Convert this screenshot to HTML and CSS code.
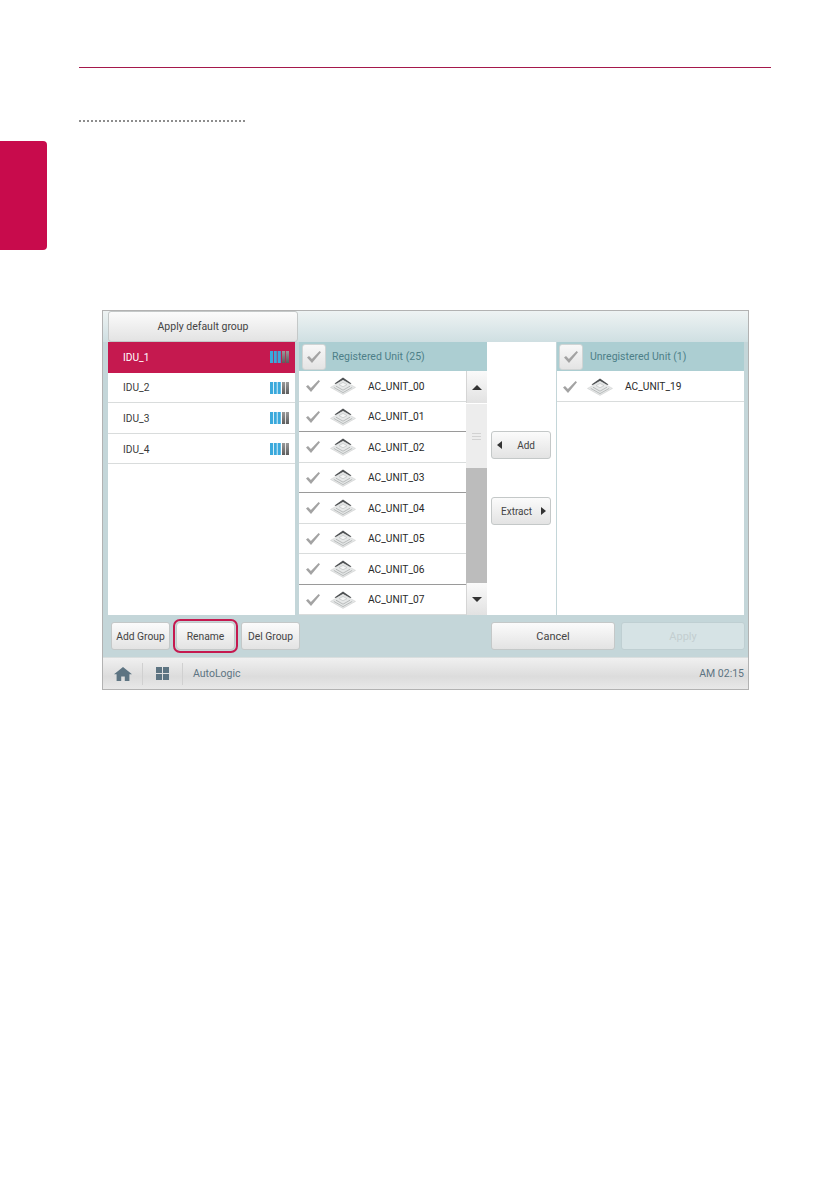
FILE: index.html
```html
<!DOCTYPE html>
<html lang="en">

<head>
    <meta charset="UTF-8">
    <title>AutoLogic group</title>
    <link rel="stylesheet" href="styles.css">
</head>

<body>
    <svg class="defs" width="0" height="0">
        <defs>
            <linearGradient id="bar-grey" x1="0" y1="0" x2="0" y2="1">
                <stop offset="0" stop-color="#9a9a9a" />
                <stop offset="1" stop-color="#5c5c5c" />
            </linearGradient>
        </defs>
        <symbol id="check" viewBox="0 0 16 14">
            <path d="M1 7.5l2-1.6 2.9 3L13.6 1l1.4 1.2L6 13z" fill="#a3a3a3" />
        </symbol>
        <symbol id="unit" viewBox="0 0 26 18">
            <path d="M13 .5L21.5 6.4 20 7 13 3 6 7 4.5 6.4z" fill="#4f5254" />
            <path d="M13 3.4L25.5 10.4 13 17.4 .5 10.4z" fill="#e6e8e8" stroke="#c8cbcb" stroke-width=".5" />
            <path d="M13 5.4L9 7.6l4 2.2 4-2.2z" fill="#f4f5f5" stroke="#bcbfbf" stroke-width=".6" />
            <path d="M6 9.2l7 4 7-4M3.8 10.4l9.2 5.2 9.2-5.2" fill="none" stroke="#b2b5b5" stroke-width=".9" />
        </symbol>
        <symbol id="bars" viewBox="0 0 19 12">
            <path d="M0 0h3v12H0zM3.8 0h3v12h-3zM7.6 0h3.2v12H7.6z" fill="#3aa9dc" />
            <path d="M12 0h3.2v12H12zM16 0h3v12h-3z" fill="url(#bar-grey)" />
        </symbol>
    </svg>

    <header class="page-top">
        <div class="page-rule"></div>
        <div class="page-dots"></div>
    </header>
    <div class="side-tab"></div>

    <section class="panel">
        <div class="top-bar">
            <button class="btn btn-default">Apply default group</button>
        </div>

        <div class="columns">
            <div class="col col-groups">
                <div class="group-row active"><span>IDU_1</span><svg class="bars"><use href="#bars" /></svg></div>
                <div class="group-row"><span>IDU_2</span><svg class="bars"><use href="#bars" /></svg></div>
                <div class="group-row"><span>IDU_3</span><svg class="bars"><use href="#bars" /></svg></div>
                <div class="group-row"><span>IDU_4</span><svg class="bars"><use href="#bars" /></svg></div>
            </div>

            <div class="col col-units">
                <div class="col-head">
                    <span class="check-box"><svg class="check"><use href="#check" /></svg></span>
                    <span>Registered Unit (25)</span>
                </div>
                <div class="unit-body">
                    <div class="unit-list">
                        <div class="unit-row"><svg class="check"><use href="#check" /></svg><svg class="unit"><use href="#unit" /></svg><span>AC_UNIT_00</span></div>
                        <div class="unit-row dark"><svg class="check"><use href="#check" /></svg><svg class="unit"><use href="#unit" /></svg><span>AC_UNIT_01</span></div>
                        <div class="unit-row"><svg class="check"><use href="#check" /></svg><svg class="unit"><use href="#unit" /></svg><span>AC_UNIT_02</span></div>
                        <div class="unit-row dark"><svg class="check"><use href="#check" /></svg><svg class="unit"><use href="#unit" /></svg><span>AC_UNIT_03</span></div>
                        <div class="unit-row"><svg class="check"><use href="#check" /></svg><svg class="unit"><use href="#unit" /></svg><span>AC_UNIT_04</span></div>
                        <div class="unit-row"><svg class="check"><use href="#check" /></svg><svg class="unit"><use href="#unit" /></svg><span>AC_UNIT_05</span></div>
                        <div class="unit-row dark"><svg class="check"><use href="#check" /></svg><svg class="unit"><use href="#unit" /></svg><span>AC_UNIT_06</span></div>
                        <div class="unit-row"><svg class="check"><use href="#check" /></svg><svg class="unit"><use href="#unit" /></svg><span>AC_UNIT_07</span></div>
                    </div>
                    <div class="scroll">
                        <div class="scroll-btn"><i class="tri-up"></i></div>
                        <div class="scroll-thumb"><i></i><i></i><i></i></div>
                        <div class="scroll-track"></div>
                        <div class="scroll-btn"><i class="tri-down"></i></div>
                    </div>
                </div>
            </div>

            <div class="col-move">
                <button class="btn btn-move"><i class="tri-left"></i>Add</button>
                <button class="btn btn-move"><span>Extract</span><i class="tri-right"></i></button>
            </div>

            <div class="col col-free">
                <div class="col-head">
                    <span class="check-box"><svg class="check"><use href="#check" /></svg></span>
                    <span>Unregistered Unit (1)</span>
                </div>
                <div class="unit-row"><svg class="check"><use href="#check" /></svg><svg class="unit"><use href="#unit" /></svg><span>AC_UNIT_19</span></div>
            </div>
        </div>

        <div class="actions">
            <div class="actions-left">
                <button class="btn btn-small">Add Group</button>
                <button class="btn btn-small btn-focus">Rename</button>
                <button class="btn btn-small">Del Group</button>
            </div>
            <div class="actions-right">
                <button class="btn btn-wide">Cancel</button>
                <button class="btn btn-wide btn-off">Apply</button>
            </div>
        </div>

        <footer class="status">
            <span class="status-cell">
                <svg width="18" height="14" viewBox="0 0 18 14"><path d="M9 0L0 7.2h2.6V14h4.6V9.4h3.6V14h4.6V7.2H18z" fill="#5d7482" /></svg>
            </span>
            <span class="status-cell">
                <svg width="13" height="13" viewBox="0 0 13 13"><path d="M0 0h6v6H0zM7 0h6v6H7zM0 7h6v6H0zM7 7h6v6H7z" fill="#5d7482" /></svg>
            </span>
            <span class="status-name">AutoLogic</span>
            <span class="status-time">AM 02:15</span>
        </footer>
    </section>
</body>

</html>
```

FILE: styles.css
```css
* {
    box-sizing: border-box;
}

body {
    margin: 0;
    padding: 67px 69px 0 79px;
    height: 1192px;
    overflow: hidden;
    background-color: #fff;
    font-family: Roboto, "Liberation Sans", sans-serif;
    font-size: 10px;
    color: #333;
    position: relative;
}

.defs {
    position: absolute;
}

.page-rule {
    height: 1px;
    background-color: #a5184b;
}

.page-dots {
    width: 166px;
    height: 2px;
    margin-top: 52px;
    background-image: linear-gradient(to right, #8d8d8d 50%, transparent 50%);
    background-size: 4px 2px;
}

.side-tab {
    position: absolute;
    left: 0;
    top: 141px;
    width: 47px;
    height: 109px;
    background-color: #c80b4c;
    border-radius: 0 4px 4px 0;
}

.panel {
    width: 647px;
    height: 380px;
    margin: 188px 0 0 23px;
    border: 1px solid #b2b2b2;
    background-color: #c4d6d9;
    display: flex;
    flex-direction: column;
}

.top-bar {
    height: 31px;
    padding-left: 5px;
    background: linear-gradient(to bottom, #eef3f3, #cfdfe2);
}

.btn {
    display: block;
    font-family: inherit;
    font-size: 10px;
    color: #444;
    padding: 0;
    border: 1px solid #c4c8c8;
    border-radius: 3px;
    background: linear-gradient(to bottom, #fbfbfb, #e3e3e3);
}

.btn-default {
    width: 190px;
    height: 31px;
    font-size: 10.5px;
}

.columns {
    height: 273px;
    padding: 0 4px 0 5px;
    display: flex;
}

.col {
    background-color: #fff;
}

.col-groups {
    width: 187px;
    margin-right: 4px;
}

.group-row {
    height: 30.6px;
    padding: 1px 6px 0 15px;
    display: flex;
    align-items: center;
    justify-content: space-between;
    border-bottom: 1px solid #d9dcdc;
    font-size: 10.2px;
    color: #3a3a3a;
}

.group-row.active {
    background-color: #c5194f;
    color: #fff;
    border-bottom: 0;
    padding-top: 0;
}

.bars {
    width: 19px;
    height: 12px;
}

.col-units {
    width: 188px;
}

.col-head {
    height: 29px;
    background-color: #acced2;
    color: #4d7f88;
    font-size: 10.5px;
    display: flex;
    align-items: center;
    gap: 6px;
    padding-left: 3px;
}

.check-box {
    width: 24px;
    height: 26px;
    border: 1px solid #d0d4d4;
    border-radius: 3px;
    background: linear-gradient(to bottom, #f8f8f8, #e4e4e4);
    display: flex;
    align-items: center;
    justify-content: center;
}

.check {
    width: 16px;
    height: 14px;
    flex: none;
}

.unit {
    width: 26px;
    height: 18px;
    flex: none;
    margin-left: 9px;
}

.unit-body {
    height: 244px;
    display: flex;
}

.unit-list {
    width: 167px;
}

.unit-row {
    height: 30.5px;
    padding: 1px 0 0 6px;
    display: flex;
    align-items: center;
    background-color: #fff;
    border-bottom: 1px solid #d9dcdc;
    color: #2a2a2a;
    font-size: 10.2px;
}

.unit-row span {
    margin-left: 12px;
}

.unit-row.dark {
    border-bottom-color: #9a9a9a;
}

.scroll {
    width: 21px;
    display: flex;
    flex-direction: column;
}

.scroll-btn {
    height: 32px;
    flex: none;
    display: flex;
    align-items: center;
    justify-content: center;
    background: linear-gradient(to bottom, #fafafa, #e2e2e2);
    border-left: 1px solid #d5d5d5;
}

.scroll-thumb {
    height: 64px;
    flex: none;
    margin-top: 1px;
    background-color: #ededed;
    display: flex;
    flex-direction: column;
    align-items: center;
    justify-content: center;
    gap: 2px;
}

.scroll-thumb i {
    width: 9px;
    height: 1px;
    background-color: #d2d2d2;
}

.scroll-track {
    flex: 1;
    background-color: #bcbcbc;
}

.tri-up,
.tri-down,
.tri-left,
.tri-right {
    display: block;
    width: 0;
    height: 0;
    border-style: solid;
    border-color: transparent;
}

.tri-up {
    border-width: 0 5px 5px;
    border-bottom-color: #333;
}

.tri-down {
    border-width: 5px 5px 0;
    border-top-color: #333;
}

.tri-left {
    border-width: 4px 5px 4px 0;
    border-right-color: #333;
}

.tri-right {
    border-width: 4px 0 4px 5px;
    border-left-color: #333;
}

.col-move {
    width: 70px;
    background-color: #fff;
    border-right: 1px solid #c4d6d9;
    padding: 89px 0 0 4px;
    display: flex;
    flex-direction: column;
    gap: 38px;
}

.btn-move {
    width: 60px;
    height: 28px;
    display: flex;
    align-items: center;
    justify-content: space-between;
    padding: 0 15px 0 5px;
}

.btn-move + .btn-move {
    padding: 0 4px 0 9px;
}

.col-free {
    width: 187px;
}

.col-free .col-head {
    padding-left: 2px;
    gap: 7px;
}

.col-free .unit-row {
    height: 31px;
    padding-left: 5px;
}

.actions {
    height: 42px;
    padding: 6px 3px 0 8px;
    display: flex;
    justify-content: space-between;
}

.actions-left {
    display: flex;
    gap: 6px;
}

.actions-right {
    display: flex;
    gap: 6px;
}

.btn-small {
    width: 59px;
    height: 28px;
    margin-top: 1px;
    font-size: 10.3px;
}

.btn-focus {
    position: relative;
    outline: 2px solid #c5194f;
    outline-offset: 1px;
    border-radius: 4px;
}

.btn-wide {
    width: 124px;
    height: 28px;
    margin-top: 1px;
    font-size: 11px;
}

.btn-off {
    background: #d6e3e5;
    border-color: #bfcfd2;
    color: #c3ced0;
}

.status {
    flex: 1;
    border-top: 1px solid #d9dede;
    background: linear-gradient(to bottom, #f0f0f0, #dcdcdc 60%, #e8e8e8);
    display: flex;
    align-items: center;
    color: #5d7482;
    font-size: 10.5px;
    padding-right: 4px;
}

.status-cell {
    width: 40px;
    height: 22px;
    display: flex;
    align-items: center;
    justify-content: center;
    border-right: 1px solid #d0d0d0;
}

.status-name {
    margin-left: 10px;
}

.status-time {
    margin-left: auto;
}
```
